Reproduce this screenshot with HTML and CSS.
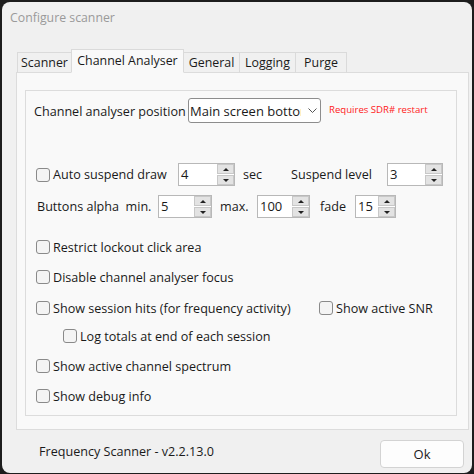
FILE: index.html
```html
<!DOCTYPE html>
<html>
<head>
<meta charset="utf-8">
<link rel="stylesheet" href="styles.css">
</head>
<body>
<div class="window">
  <div class="titlebar">Configure scanner</div>
  <div class="tabs">
    <div class="tab t-scanner">Scanner</div>
    <div class="tab t-channel active">Channel Analyser</div>
    <div class="tab t-general">General</div>
    <div class="tab t-logging">Logging</div>
    <div class="tab t-purge">Purge</div>
  </div>
  <div class="panel">
    <div class="group">
      <div class="row r1">
        <span class="lbl-position">Channel analyser position</span>
        <div class="combo">
          <span class="combo-text">Main screen bottom</span>
          <svg class="chev" width="9" height="5" viewBox="0 0 9 5"><path d="M0.5 0.5 L4.5 4.5 L8.5 0.5" fill="none" stroke="#555" stroke-width="1"/></svg>
        </div>
        <span class="note">Requires SDR# restart</span>
      </div>

      <div class="row r2">
        <label class="check w-auto"><span class="box"></span>Auto suspend draw</label>
        <div class="spin s57"><span class="val">4</span><div class="btns"><span class="sb up"></span><span class="sb down"></span></div></div>
        <span class="lbl-sec">sec</span>
        <span class="lbl-level">Suspend level</span>
        <div class="spin s56"><span class="val">3</span><div class="btns"><span class="sb up"></span><span class="sb down"></span></div></div>
      </div>

      <div class="row r3">
        <span class="lbl-alpha">Buttons alpha&nbsp; min.</span>
        <div class="spin s54"><span class="val">5</span><div class="btns"><span class="sb up"></span><span class="sb down"></span></div></div>
        <span class="lbl-max">max.</span>
        <div class="spin s53"><span class="val">100</span><div class="btns"><span class="sb up"></span><span class="sb down"></span></div></div>
        <span class="lbl-fade">fade</span>
        <div class="spin s41"><span class="val">15</span><div class="btns"><span class="sb up"></span><span class="sb down"></span></div></div>
      </div>

      <div class="row crow c1"><label class="check"><span class="box"></span>Restrict lockout click area</label></div>
      <div class="row crow c2"><label class="check"><span class="box"></span>Disable channel analyser focus</label></div>
      <div class="row crow c3">
        <label class="check w-hits"><span class="box"></span>Show session hits (for frequency activity)</label>
        <label class="check"><span class="box"></span>Show active SNR</label>
      </div>
      <div class="row crow c4"><label class="check indent"><span class="box"></span>Log totals at end of each session</label></div>
      <div class="row crow c5"><label class="check"><span class="box"></span>Show active channel spectrum</label></div>
      <div class="row crow c6"><label class="check"><span class="box"></span>Show debug info</label></div>
    </div>
  </div>
  <div class="footer">
    <span class="version">Frequency Scanner - v2.2.13.0</span>
    <button class="ok">Ok</button>
  </div>
</div>
</body>
</html>
```

FILE: styles.css
```css
* { box-sizing: border-box; }
html, body { margin: 0; height: 100%; }
body {
  background: #1d1d1d;
  padding: 2px 2px 1px 2px;
  font-family: "Open Sans", "Noto Sans", sans-serif;
  font-size: 12.6px;
  color: #1a1a1a;
}
.window {
  width: 470px;
  height: 471px;
  background: #f0f0f0;
  border-radius: 8px;
  display: flex;
  flex-direction: column;
}
.titlebar {
  height: 47px;
  padding: 8px 0 0 8px;
  line-height: 16px;
  font-size: 12.3px;
  color: #9a9a9a;
}
.tabs {
  display: flex;
  align-items: flex-end;
  height: 24px;
  padding-left: 15px;
  margin-bottom: -1px;
  position: relative;
  z-index: 1;
  font-size: 12.4px;
}
.tab {
  height: 21px;
  line-height: 20px;
  text-align: center;
  border: 1px solid #dadada;
  border-bottom-color: #dcdcdc;
  background: #f0f0f0;
  white-space: nowrap;
}
.tab.active {
  height: 24px;
  line-height: 22px;
  background: #f9f9f9;
  border-bottom-color: #f9f9f9;
}
.t-scanner { width: 54px; border-right: none; }
.t-channel { width: 113px; }
.t-general { width: 55px; border-left: none; border-right: none; }
.t-logging { width: 57px; }
.t-purge { width: 51px; border-left: none; }

.panel {
  margin-left: 14px;
  width: 453px;
  height: 358px;
  border: 1px solid #dcdcdc;
  background: #f9f9f9;
  padding: 17px 0 0 8px;
}
.group {
  width: 432px;
  height: 326px;
  border: 1px solid #dcdcdc;
  padding-left: 8px;
}
.row {
  display: flex;
  align-items: center;
  white-space: nowrap;
}
.r1 { margin-top: 7px; height: 25px; }
.lbl-position { width: 154px; position: relative; top: 1px; }
.combo {
  width: 133px;
  height: 25px;
  background: #fff;
  border: 1px solid #8d8d8d;
  border-radius: 3px;
  display: flex;
  align-items: center;
  padding-left: 1px;
}
.combo-text { width: 111px; overflow: hidden; font-size: 13px; }
.chev { margin-left: 7px; }
.note {
  margin-left: 8px;
  font-size: 9.6px;
  color: #ff1a1a;
  position: relative;
  top: -1px;
}

.r2 { margin-top: 40px; height: 23px; }
.r3 { margin-top: 9px; height: 23px; }

.check {
  display: flex;
  align-items: center;
  margin-left: 2px;
}
.box {
  width: 14px;
  height: 14px;
  border: 1px solid #8a8a8a;
  border-radius: 3px;
  background: #f4f4f4;
  margin-right: 3px;
  flex: none;
}
.w-auto { width: 142px; }
.w-hits { width: 281px; }
.indent { margin-left: 29px; }

.spin {
  height: 23px;
  display: flex;
  border: 1px solid #b8b8b8;
  background: #fff;
}
.s57 { width: 57px; }
.s56 { width: 56px; }
.s54 { width: 54px; }
.s53 { width: 53px; }
.s41 { width: 41px; }
.val { flex: 1; padding-left: 2px; line-height: 20px; font-size: 13px; }
.btns {
  width: 17px;
  display: flex;
  flex-direction: column;
  gap: 1px;
}
.sb {
  flex: 1;
  background: #e3e3e3;
  border: 1px solid #c8c8c8;
  display: flex;
  align-items: center;
  justify-content: center;
}
.sb::after {
  content: "";
  width: 0;
  height: 0;
  border-left: 3px solid transparent;
  border-right: 3px solid transparent;
}
.up::after { border-bottom: 3px solid #222; }
.down::after { border-top: 3px solid #222; }

.lbl-sec { margin-left: 8px; width: 48px; }
.lbl-level { width: 96px; }
.lbl-alpha { margin-left: 3px; width: 121px; }
.lbl-max { margin-left: 8px; width: 37px; }
.lbl-fade { margin-left: 10px; width: 35px; }

.crow { height: 20px; }
.c1 { margin-top: 19px; }
.c2 { margin-top: 10px; }
.c3 { margin-top: 11px; }
.c4 { margin-top: 8px; }
.c5 { margin-top: 10px; }
.c6 { margin-top: 10px; }

.footer {
  display: flex;
  align-items: center;
  margin-top: 10px;
  height: 28px;
  padding-left: 37px;
}
.version { margin-bottom: 6px; }
.ok {
  margin-left: auto;
  margin-right: 8px;
  width: 84px;
  height: 28px;
  border: 1px solid #d3d3d3;
  border-radius: 4px;
  background: #fdfdfd;
  font-family: inherit;
  font-size: 13px;
  color: #1a1a1a;
  padding: 0;
}
```
